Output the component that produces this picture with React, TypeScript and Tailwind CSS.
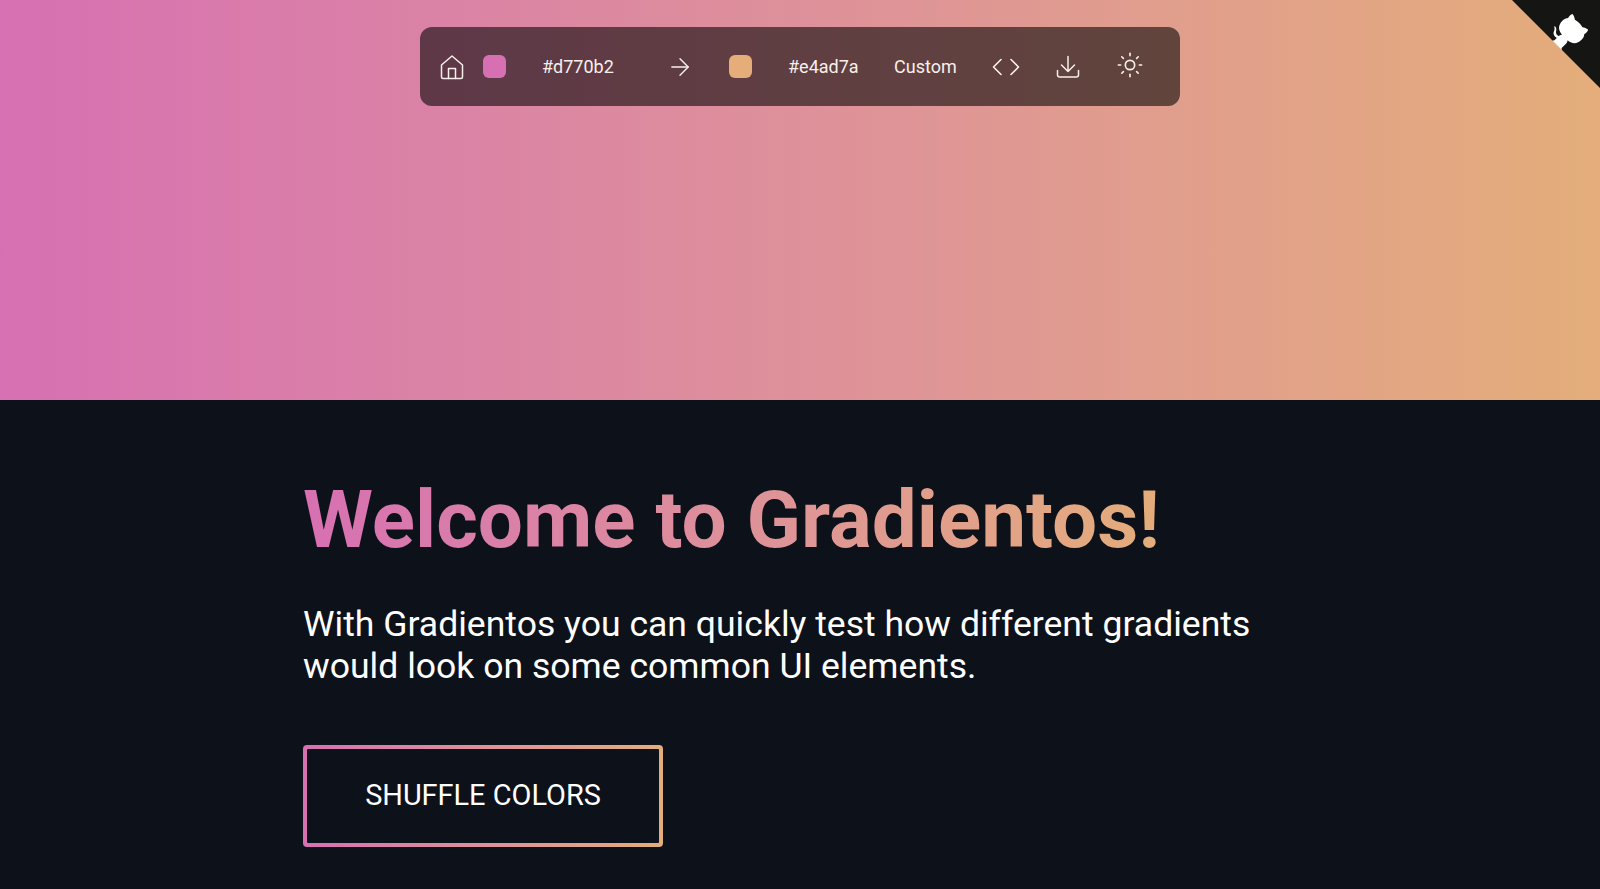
import { ArrowRight, Code, Sun } from 'lucide-react'

const fromColor = '#d770b2'
const toColor = '#e4ad7a'

function GithubCorner() {
  return (
    <svg viewBox="0 0 250 250" className="absolute top-0 right-0 h-[88px] w-[88px] fill-[#151513] text-white">
      <path d="M0,0 L115,115 L130,115 L142,142 L250,250 L250,0 Z" />
      <path
        d="M128.3,109.0 C113.8,99.7 119.0,89.6 119.0,89.6 C122.0,82.7 120.5,78.6 120.5,78.6 C119.2,72.0 123.4,76.3 123.4,76.3 C127.3,80.9 125.5,87.3 125.5,87.3 C122.9,97.6 130.6,101.9 134.4,103.2"
        fill="currentColor"
      />
      <path
        d="M115.0,115.0 C114.9,115.1 118.7,116.5 119.8,115.4 L133.7,101.6 C136.9,99.2 139.9,98.4 142.2,98.6 C133.8,88.0 127.5,74.4 143.8,58.0 C148.5,53.4 154.0,51.2 159.7,51.0 C160.3,49.4 163.2,43.6 171.4,40.1 C171.4,40.1 176.1,42.5 178.8,56.2 C183.1,58.6 187.2,61.8 190.9,65.4 C194.5,69.0 197.7,73.2 200.1,77.6 C213.8,80.2 216.3,84.9 216.3,84.9 C212.7,93.1 206.9,96.0 205.4,96.6 C205.1,102.4 203.0,107.8 198.3,112.5 C181.9,128.9 168.3,122.5 157.7,114.1 C157.9,116.9 156.7,120.9 152.7,124.9 L141.0,136.5 C139.8,137.7 141.6,141.9 141.8,141.8 Z"
        fill="currentColor"
      />
    </svg>
  )
}

function HomeIcon() {
  return (
    <svg viewBox="0 0 28 28" className="h-7 w-7" fill="none" stroke="currentColor" strokeWidth={1.5} strokeLinecap="round" strokeLinejoin="round">
      <path d="M3.5 12 14 3l10.5 9v12a1.5 1.5 0 0 1-1.5 1.5H5A1.5 1.5 0 0 1 3.5 24z" />
      <path d="M10.5 25.5V15.5h7v10" />
    </svg>
  )
}

function DownloadIcon() {
  return (
    <svg viewBox="0 0 24 24" className="h-6 w-6" fill="none" stroke="currentColor" strokeWidth={1.5} strokeLinecap="round" strokeLinejoin="round">
      <path d="M1.5 15.5v4.25a2.25 2.25 0 0 0 2.25 2.25h16.5a2.25 2.25 0 0 0 2.25-2.25V15.5" />
      <path d="M12 1.5v15M5.5 10l6.5 6.5L18.5 10" />
    </svg>
  )
}

export default function App() {
  return (
    <div className="min-h-[889px] bg-[#0d111a] font-['Roboto',sans-serif] text-white">
      <header className="relative flex h-[400px] justify-center overflow-hidden bg-linear-to-r from-[#d770b2] to-[#e4ad7a] pt-[27px]">
        <nav className="flex h-[79px] w-[760px] items-center rounded-xl bg-black/[.57] pl-[18px] text-[18px] text-[#f7f0ea]">
          <HomeIcon />
          <span className="ml-[17px] h-[23px] w-[23px] rounded-md" style={{ backgroundColor: fromColor }} />
          <span className="ml-[36px] w-[71px]">{fromColor}</span>
          <ArrowRight size={28} strokeWidth={1.2} className="ml-[53px]" />
          <span className="ml-[35px] h-[23px] w-[23px] rounded-md" style={{ backgroundColor: toColor }} />
          <span className="ml-[36px] w-[71px]">{toColor}</span>
          <span className="ml-[35px] w-[62px]">Custom</span>
          <Code size={30} strokeWidth={1.3} className="ml-[35px]" />
          <span className="ml-[35px]">
            <DownloadIcon />
          </span>
          <Sun size={28} strokeWidth={1.4} className="mb-[3px] ml-[36px]" />
        </nav>
        <GithubCorner />
      </header>

      <main className="pt-[73px] pl-[303px]">
        <h1 className="w-fit bg-linear-to-r from-[#d770b2] to-[#e4ad7a] bg-clip-text text-[80px] leading-[94px] font-bold text-transparent">
          Welcome to Gradientos!
        </h1>
        <p className="mt-[36px] w-[1000px] text-[35.57px] leading-[42px]">
          With Gradientos you can quickly test how different gradients would look on some common UI elements.
        </p>
        <button className="mt-[58px] h-[102px] w-[360px] rounded-[4px] bg-linear-to-r from-[#d770b2] to-[#e4ad7a] p-1">
          <span className="flex h-full w-full items-center justify-center rounded-[1px] bg-[#0d111a] text-[28.9px]">SHUFFLE COLORS</span>
        </button>
      </main>
    </div>
  )
}
